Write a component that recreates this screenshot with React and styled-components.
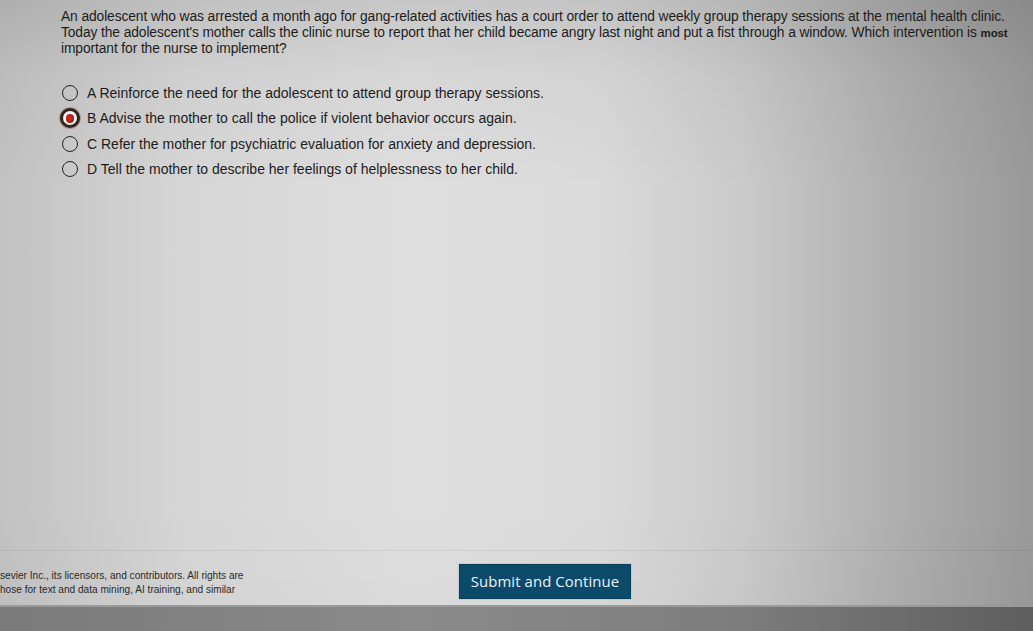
import React from "react";
import styled, { createGlobalStyle } from "styled-components";

const Global = createGlobalStyle`
  html, body { margin: 0; padding: 0; }
  body { font-family: "Liberation Sans", Arial, sans-serif; overflow: hidden; }
`;

const Page = styled.div`
  width: 1033px;
  height: 631px;
  display: flex;
  flex-direction: column;
  overflow: hidden;
  background:
    linear-gradient(to bottom, rgba(0,0,0,0.10) 0%, rgba(0,0,0,0.03) 12%, rgba(0,0,0,0) 30%, rgba(0,0,0,0) 80%, rgba(0,0,0,0.02) 100%),
    linear-gradient(to right, #c2c2c2 0%, #d6d6d6 18%, #dedede 40%, #dadada 58%, #cacaca 72%, #b0b0b0 86%, #999 100%);
`;

const Main = styled.main`
  flex: 1;
  padding: 9px 0 0 61px;
  color: #1c1c1c;
`;

const Question = styled.p`
  margin: 0;
  font-size: 13.8px;
  line-height: 15.5px;
  letter-spacing: -0.1px;
  white-space: nowrap;
`;

const Strong = styled.b`
  font-size: 11.5px;
  font-weight: 700;
`;

const Options = styled.ul`
  list-style: none;
  margin: 24px 0 0;
  padding: 0 0 0 1px;
  display: flex;
  flex-direction: column;
`;

const Option = styled.li`
  display: flex;
  align-items: center;
  height: 25.3px;
  gap: 9px;
  font-size: 14px;
  letter-spacing: 0;
`;

const Radio = styled.span`
  box-sizing: border-box;
  width: 16px;
  height: 16px;
  border-radius: 50%;
  flex: none;
  border: 1.6px solid #252525;
  display: flex;
  align-items: center;
  justify-content: center;
  ${(p) =>
    p.$checked &&
    `
    width: 20px;
    height: 20px;
    margin: 0 -2px;
    border: 3px solid #30241d;
    background: #f2f2f2;
    box-shadow: 0 0 0 1px rgba(120,60,40,0.35);
    &::after {
      content: "";
      width: 8.5px;
      height: 8.5px;
      border-radius: 50%;
      background: radial-gradient(circle at 40% 40%, #cc2e28, #9c140f);
    }
  `}
`;

const Footer = styled.footer`
  height: 54px;
  border-top: 1px solid rgba(0,0,0,0.06);
  display: flex;
  align-items: center;
`;

const Legal = styled.div`
  width: 459px;
  font-size: 10.1px;
  line-height: 14px;
  color: #2a2a2a;
  white-space: nowrap;
  padding-top: 10px;
`;

const SubmitButton = styled.button`
  width: 172px;
  height: 35px;
  margin-top: 6px;
  background: #0c4a6c;
  border: 1px solid #0a3f5c;
  color: #e9f2f6;
  font-family: "Open Sans", "Noto Sans", sans-serif;
  font-size: 14.9px;
  font-weight: 500;
  letter-spacing: 0.1px;
  cursor: pointer;
  box-shadow: 0 0 0 1px rgba(150,180,190,0.3);
`;

const Band = styled.div`
  height: 24px;
  background: linear-gradient(to right, #7a7a7a 0%, #8a8a8a 40%, #7e7e7e 70%, #5e5e5e 100%);
  border-top: 2px solid #9a9a9a;
`;

const options = [
  "A Reinforce the need for the adolescent to attend group therapy sessions.",
  "B Advise the mother to call the police if violent behavior occurs again.",
  "C Refer the mother for psychiatric evaluation for anxiety and depression.",
  "D Tell the mother to describe her feelings of helplessness to her child.",
];

export default function App() {
  return (
    <>
      <Global />
      <Page>
        <Main>
          <Question>
            An adolescent who was arrested a month ago for gang-related activities has a court order to attend weekly group therapy sessions at the mental health clinic.
            <br />
            Today the adolescent's mother calls the clinic nurse to report that her child became angry last night and put a fist through a window. Which intervention is <Strong>most</Strong>
            <br />
            important for the nurse to implement?
          </Question>
          <Options>
            {options.map((o, i) => (
              <Option key={i}>
                <Radio $checked={i === 1} />
                {o}
              </Option>
            ))}
          </Options>
        </Main>
        <Footer>
          <Legal>
            sevier Inc., its licensors, and contributors. All rights are
            <br />
            hose for text and data mining, AI training, and similar
          </Legal>
          <SubmitButton>Submit and Continue</SubmitButton>
        </Footer>
        <Band />
      </Page>
    </>
  );
}
